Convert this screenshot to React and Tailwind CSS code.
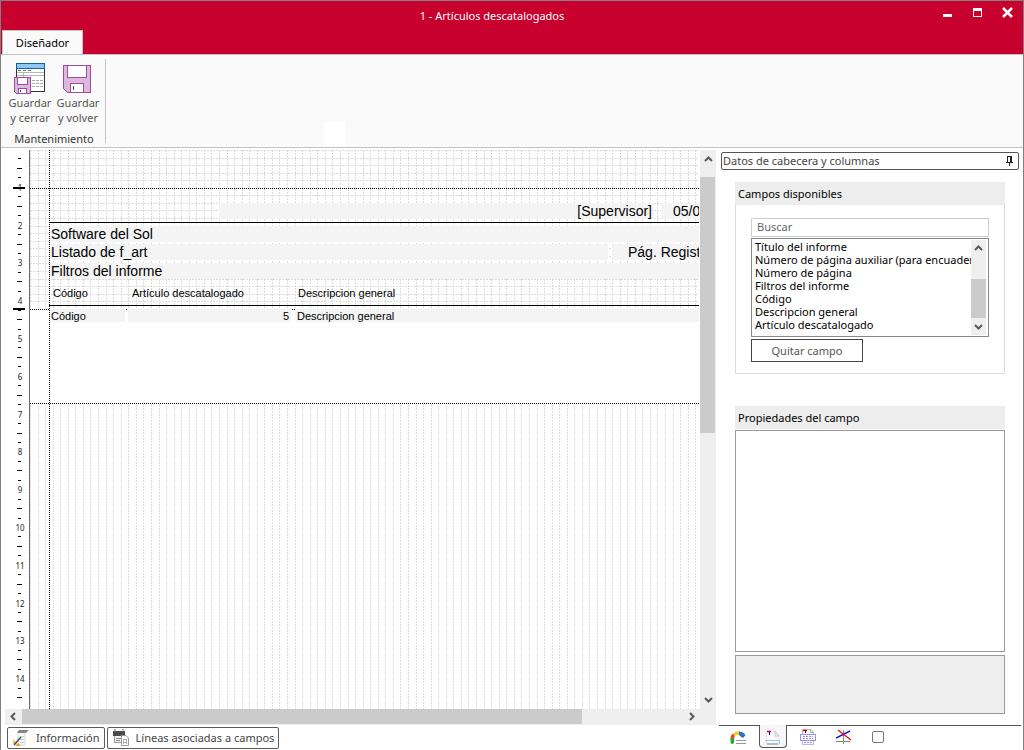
const CM = 37.8;
const STEP = CM / 5;

const FIELDS = [
  "Título del informe",
  "Número de página auxiliar (para encuadernar)",
  "Número de página",
  "Filtros del informe",
  "Código",
  "Descripcion general",
  "Artículo descatalogado",
];

function range(n) {
  return Array.from({ length: n }, (_, i) => i);
}

function Chevron({ dir }) {
  const d = {
    up: "M1 6 L4.5 2.5 L8 6",
    down: "M1 3 L4.5 6.5 L8 3",
    left: "M6 1 L2.5 4.5 L6 8",
    right: "M3 1 L6.5 4.5 L3 8",
  }[dir];
  return (
    <svg width="9" height="9" viewBox="0 0 9 9" fill="none" stroke="#5a5a5a" strokeWidth="2">
      <path d={d} />
    </svg>
  );
}

function FloppyIcon() {
  return (
    <svg width="32" height="32" viewBox="1 0 32 32" shapeRendering="crispEdges">
      <path d="M2.5 2.5H29.5V29.5H6.5L2.5 25.5Z" fill="#dcb9dc" stroke="#a04aa0" />
      <rect x="6.5" y="2.5" width="19" height="12" fill="#fff" stroke="#a04aa0" />
      <rect x="9.5" y="20.5" width="13" height="9" fill="#fff" stroke="#a04aa0" />
      <path d="M12.5 23V27" stroke="#555" />
    </svg>
  );
}

function SaveCloseIcon() {
  return (
    <svg width="32" height="32" viewBox="0 0 32 32" shapeRendering="crispEdges">
      <rect x="2.5" y="0.5" width="28" height="28" fill="#fff" stroke="#333" />
      <rect x="2.5" y="0.5" width="28" height="5" fill="#8fc7f0" stroke="#0d63ad" />
      <path d="M4 7.5H18" stroke="#777" strokeDasharray="3 2" />
      <path d="M3 9.5H30M3 12.5H30M9.5 10V14" stroke="#b5b5b5" fill="none" />
      <path d="M18 17.5H29M18 20.5H29M18 23.5H29" stroke="#aaa" strokeDasharray="3 1" />
      <path d="M0.5 14.5H16.5V30.5H2.5L0.5 28.5Z" fill="#dcb9dc" stroke="#a04aa0" />
      <rect x="3.5" y="14.5" width="10" height="7" fill="#fff" stroke="#a04aa0" />
      <rect x="4.5" y="25.5" width="8" height="5" fill="#fff" stroke="#a04aa0" />
      <path d="M6.5 27V29" stroke="#555" />
    </svg>
  );
}

function PinIcon() {
  return (
    <svg width="8" height="10" viewBox="0 0 8 10" shapeRendering="crispEdges" stroke="#222" fill="none">
      <path d="M1.5 6V0.5H5.5V6M4.5 0V6M0 6.5H7M3.5 7V10" />
    </svg>
  );
}

function InfoIcon() {
  return (
    <svg width="18" height="18" viewBox="0 0 18 18">
      <path d="M6 2H14L13 5V16H6Z" fill="#f7f7f7" stroke="#dadada" />
      <path d="M7 1H17L14 4H5Z" fill="#858585" />
      <path d="M8 7.5H12M8 10.5H12M8 13.5H12" stroke="#ccc" />
      <path d="M1 10L5 14L1 15Z" fill="#f8bf5e" />
      <path d="M2 16L9 8" stroke="#3c5064" strokeWidth="1.5" />
      <path d="M3 17L6 14L9 17Z" fill="#f29a2e" />
    </svg>
  );
}

function LinesIcon() {
  return (
    <svg width="18" height="18" viewBox="0 0 18 18">
      <rect x="2.5" y="4.5" width="9" height="9" fill="#f0f0f0" stroke="#999" />
      <path d="M1 2H13V7H1Z" fill="#4a4a4a" />
      <path d="M3 0V3M11 0V3" stroke="#777" />
      <path d="M4 9.5H9M4 11.5H8" stroke="#888" />
      <path d="M9.5 6.5H14L16.5 9V16.5H9.5Z" fill="#fff" stroke="#999" />
      <path d="M11.5 10V15M14.5 10V15M11 10.5H15M11 13.5H15" stroke="#b0b0b0" />
    </svg>
  );
}

function FormatIcon() {
  return (
    <svg width="16" height="16" viewBox="0 0 16 16">
      <path d="M0.5 9C0.5 5 2 3.5 4.5 4L4.5 8Z" fill="#e8402c" />
      <path d="M3.5 3.5Q6 0.5 9 1.5V5Q7 4 5 6Z" fill="#f2d11b" />
      <path d="M9 1.5Q13 1.5 15.5 5L13 8Q11 7 9 5Z" fill="#2d72bd" />
      <path d="M0.5 9L4 7V13Q1.5 15 0.5 12.5Z" fill="#1da838" />
      <path d="M6 10.5H15.5M6 13.5H15.5" stroke="#999" shapeRendering="crispEdges" />
    </svg>
  );
}

function HeaderPageIcon() {
  return (
    <svg width="16" height="16" viewBox="0 0 16 16">
      <path d="M1.5 1.5H10L14 5.5V14.5H1.5Z" fill="#fafafa" stroke="#e6e6e6" />
      <path d="M10 1V6H14Z" fill="#eee" stroke="#ccc" />
      <path d="M2 1.5H6" stroke="#e00000" strokeWidth="1.5" />
      <path d="M4.5 2V5" stroke="#0000c8" />
      <path d="M0 10.5H14.5V14" stroke="#9cc8f0" fill="none" />
      <path d="M2 14H13" stroke="#bbb" strokeWidth="2" />
    </svg>
  );
}

function PrintIcon() {
  return (
    <svg width="16" height="16" viewBox="0 0 16 16">
      <path d="M2.5 0.5H11L13.5 3V15.5H2.5Z" fill="#fafafa" stroke="#bbb" />
      <path d="M10.5 0.5V3.5H13.5" fill="none" stroke="#aaa" />
      <path d="M3 1.5H7" stroke="#e00000" strokeWidth="1.5" />
      <path d="M5.5 2V4" stroke="#0000c8" />
      <rect x="0.5" y="5.5" width="15" height="6" fill="#fff" stroke="#9090ff" />
      <path d="M3 7.5H13M3 9.5H13M4 13.5H12" stroke="#9a9ad8" strokeDasharray="2 1" />
    </svg>
  );
}

function AxesIcon() {
  return (
    <svg width="16" height="16" viewBox="0 0 16 16" fill="none">
      <path d="M7.500 1V15M0 12.5H14" stroke="#888" />
      <path d="M0 9L14 2" stroke="#1414d8" strokeWidth="1.5" />
      <path d="M2 1L15 11" stroke="#f01414" strokeWidth="1.5" />
    </svg>
  );
}

function Ruler() {
  return (
    <svg className="h-full w-[25px] shrink-0 border-r border-[#6b6b6b]" shapeRendering="crispEdges">
      {range(59).map((i) => {
        const y = Math.round((i * CM) / 4);
        if (i % 4 === 0) return null;
        const wide = i % 4 === 2;
        return <rect key={i} x={wide ? 12 : 13} y={y - 1} width={wide ? 5 : 3} height="1" fill="#000" />;
      })}
      {range(14).map((i) => (
        <text
          key={i}
          x="15"
          y={Math.round((i + 1) * CM) + 3}
          textAnchor="middle"
          fill="#222"
          className="text-[8px]"
        >
          {i + 1}
        </text>
      ))}
      <rect x="8" y="37" width="12" height="2" fill="#000" />
      <rect x="8" y="158" width="12" height="2" fill="#000" />
    </svg>
  );
}

function Grid() {
  return (
    <svg className="absolute inset-0 h-full w-full" shapeRendering="crispEdges">
      <g stroke="#dcdcdc" strokeDasharray="2 1">
        {range(260).map((i) => {
          const x = Math.round(i * STEP) + 0.5;
          return <line key={i} x1={x} x2={x} y1="0" y2="2000" />;
        })}
        {range(21).map((i) => {
          const y = Math.round(i * STEP) + 0.5;
          return <line key={i} x1="0" x2="2000" y1={y} y2={y} />;
        })}
      </g>
      <rect x="0" y="160" width="2000" height="93" fill="#fff" />
      <g stroke="#000" strokeDasharray="1 1">
        <line x1="0" x2="2000" y1="38.5" y2="38.5" />
        <line x1="0" x2="2000" y1="159.5" y2="159.5" />
        <line x1="0" x2="2000" y1="253.5" y2="253.5" />
        <line x1="19.5" x2="19.5" y1="0" y2="2000" />
      </g>
      <rect x="19" y="72" width="2000" height="1" fill="#000" />
      <rect x="19" y="155" width="2000" height="1" fill="#000" />
    </svg>
  );
}

function Field({ className, children }) {
  return <div className={`absolute overflow-hidden whitespace-nowrap ${className}`}>{children}</div>;
}

function Canvas() {
  return (
    <div className="relative mr-px min-w-0 flex-1 overflow-hidden bg-white font-['Liberation_Sans',sans-serif] text-black">
      <Grid />
      <Field className="left-[189px] top-[53px] h-4 w-[435px] bg-[#f4f4f4] pr-0.5 text-right text-sm leading-4">
        [Supervisor]
      </Field>
      <Field className="left-[631px] right-0 top-[53px] h-4 bg-[#f4f4f4] pl-3 text-sm leading-4">05/0</Field>
      <Field className="left-5 right-0 top-[76px] h-4 bg-[#f4f4f4] pl-px text-sm leading-4">Software del Sol</Field>
      <Field className="left-5 top-[94px] h-4 w-[558px] bg-[#f4f4f4] pl-px text-sm leading-4">Listado de f_art</Field>
      <Field className="left-[582px] right-0 top-[94px] h-4 bg-[#f4f4f4] pl-4 text-sm leading-4">Pág. Regist</Field>
      <Field className="left-5 right-0 top-[113px] h-4 bg-[#f4f4f4] pl-px text-sm leading-4">Filtros del informe</Field>
      <Field className="left-[23px] top-[137px] h-[13px] text-[11px] leading-[13px]">Código</Field>
      <Field className="left-[102px] top-[137px] h-[13px] text-[11px] leading-[13px]">Artículo descatalogado</Field>
      <Field className="left-[268px] top-[137px] h-[13px] text-[11px] leading-[13px]">Descripcion general</Field>
      <Field className="left-5 top-[159px] h-[13px] w-[75px] bg-[#f4f4f4] pl-px text-[11px] leading-[14px]">
        Código
      </Field>
      <Field className="left-[98px] top-[159px] h-[13px] w-[163px] bg-[#f4f4f4] pr-0.5 text-right text-[11px] leading-[14px]">
        5
      </Field>
      <Field className="left-[265px] right-0 top-[159px] h-[13px] bg-[#f4f4f4] pl-0.5 text-[11px] leading-[14px]">
        Descripcion general
      </Field>
    </div>
  );
}

function Designer() {
  return (
    <div className="flex min-w-0 flex-1 flex-col pl-1 pt-0.5">
      <div className="mr-[3px] flex min-h-0 flex-1">
        <Ruler />
        <Canvas />
        <div className="flex w-4 shrink-0 flex-col items-center bg-[#efefef]">
          <button aria-label="Subir" className="flex h-[27px] w-full items-start justify-center pt-[5px]">
            <Chevron dir="up" />
          </button>
          <div className="h-64 w-[15px] self-start bg-[#cbcbcb]" />
          <button aria-label="Bajar" className="mt-auto flex h-5 w-full items-center justify-center">
            <Chevron dir="down" />
          </button>
        </div>
      </div>
      <div className="mr-[3px] flex h-4 shrink-0 items-start bg-[#efefef]">
        <button aria-label="Izquierda" className="flex h-[15px] w-[17px] items-center justify-center">
          <Chevron dir="left" />
        </button>
        <div className="h-[15px] w-[560px] bg-[#cbcbcb]" />
        <button aria-label="Derecha" className="ml-auto mr-4 flex h-[15px] w-[17px] items-center justify-center">
          <Chevron dir="right" />
        </button>
      </div>
      <div className="flex h-[25px] shrink-0 items-start gap-0.5 pl-0.5 pt-0.5">
        <button className="flex h-[22px] items-center gap-1.5 rounded-xs border border-[#5a5a5a] pl-1 pr-1 pb-px text-[#444]">
          <InfoIcon />
          Información
        </button>
        <button className="flex h-[22px] items-center gap-1.5 rounded-xs border border-[#5a5a5a] pl-1 pr-1 pb-px text-[#444]">
          <LinesIcon />
          Líneas asociadas a campos
        </button>
      </div>
    </div>
  );
}

function SidePanel() {
  return (
    <aside className="flex w-[304px] shrink-0 flex-col pr-0.5">
      <div className="mx-0.5 mt-1 flex h-[18px] items-center justify-between rounded-xs border border-[#555] pl-px pr-1 text-[#444]">
        <span className="pb-0.5">Datos de cabecera y columnas</span>
        <button aria-label="Fijar panel">
          <PinIcon />
        </button>
      </div>
      <section className="ml-4 mr-4 mt-3">
        <h2 className="h-[23px] bg-[#ededed] pl-[3px] leading-[23px] text-black">Campos disponibles</h2>
        <div className="border border-t-0 border-[#dcdcdc] px-[15px] pb-[11px] pt-[13px]">
          <input
            aria-label="Buscar"
            placeholder="Buscar"
            className="block h-[19px] w-full border border-[#cfcfcf] px-[5px] pb-0.5 outline-none placeholder:text-[#666]"
          />
          <div className="mt-px flex h-[99px] border border-[#828790] pb-px pl-px pr-0.5">
            <select
              size={7}
              aria-label="Campos disponibles"
              className="h-full min-w-0 flex-1 overflow-hidden bg-white text-black outline-none [scrollbar-width:none]"
            >
              {FIELDS.map((f) => (
                <option key={f} className="h-[13px] min-h-0 p-0 pl-0.5 leading-[13px]">
                  {f}
                </option>
              ))}
            </select>
            <div className="mt-px flex w-[15px] flex-col bg-[#efefef]">
              <button aria-label="Subir lista" className="flex h-[17px] items-center justify-center">
                <Chevron dir="up" />
              </button>
              <div className="mt-[22px] h-[39px] bg-[#cbcbcb]" />
              <button aria-label="Bajar lista" className="flex h-[17px] items-center justify-center">
                <Chevron dir="down" />
              </button>
            </div>
          </div>
          <button className="mt-0.5 block h-[23px] w-28 border border-[#444] text-[#555]">Quitar campo</button>
        </div>
      </section>
      <section className="mx-4 mt-8 flex min-h-0 flex-1 flex-col">
        <h2 className="h-[23px] shrink-0 bg-[#ededed] pl-[3px] leading-[23px] text-black">Propiedades del campo</h2>
        <div className="mt-px flex-1 border border-[#9a9a9a]" />
        <div className="mt-[3px] h-[59px] border border-[#9a9a9a] bg-[#efefef]" />
      </section>
      <nav className="mt-[11px] flex h-[25px] shrink-0 border-t border-[#555]">
        <button aria-label="Formato" className="ml-[11px] mr-[13px] flex w-4 justify-center pt-1">
          <FormatIcon />
        </button>
        <button
          aria-label="Cabecera"
          className="-mt-px flex h-[23px] w-7 justify-center rounded-b-sm border border-t-0 border-[#555] bg-[#f6f6fb] pt-[5px]"
        >
          <HeaderPageIcon />
        </button>
        <button aria-label="Impresión" className="ml-[13px] flex w-4 justify-center pt-[3px]">
          <PrintIcon />
        </button>
        <button aria-label="Ejes" className="ml-5 flex w-4 justify-center pt-[3px]">
          <AxesIcon />
        </button>
        <input
          type="checkbox"
          aria-label="Marcar"
          className="ml-5 mt-[5px] h-3 w-3 appearance-none rounded-xs border border-[#777] bg-white"
        />
      </nav>
    </aside>
  );
}

export default function App() {
  return (
    <div className="flex h-screen flex-col border-x border-t border-[#808080] bg-white font-['Noto_Sans',sans-serif] text-[11px] leading-[15px]">
      <header className="grid h-[53px] shrink-0 grid-cols-[1fr_auto_1fr] items-start bg-[#c8002d] text-white">
        <button className="mt-[29px] ml-px h-[25px] w-[81px] border border-b-0 border-[#c4c4c4] bg-[#fafafa] pb-0.5 text-black">
          Diseñador
        </button>
        <h1 className="-ml-10 pt-[7px]">1 - Artículos descatalogados</h1>
        <div className="flex justify-end gap-[19px] pr-2.5 pt-1.5">
          <button aria-label="Minimizar">
            <svg width="11" height="12" shapeRendering="crispEdges">
              <rect x="1" y="7" width="9" height="3" fill="#fff" />
            </svg>
          </button>
          <button aria-label="Maximizar">
            <svg width="11" height="12" shapeRendering="crispEdges">
              <path d="M1 1H10V10H1ZM2 4V9H9V4Z" fill="#fff" fillRule="evenodd" />
            </svg>
          </button>
          <button aria-label="Cerrar">
            <svg width="11" height="12" stroke="#fff" strokeWidth="2.5">
              <path d="M1 1L10 10M10 1L1 10" />
            </svg>
          </button>
        </div>
      </header>
      <div className="flex h-[94px] shrink-0 border-b border-t border-[#c4c4c4] bg-[#fafafa]">
        <div className="my-1 flex w-[105px] flex-col items-center border-r border-[#c4c4c4] pl-0.5 pt-1 text-[#333]">
          <div className="flex text-[#555]">
            <button className="flex w-12 flex-col items-center">
              <SaveCloseIcon />
              <span>
                Guardar
                <br />y cerrar
              </span>
            </button>
            <button className="flex w-12 flex-col items-center">
              <FloppyIcon />
              <span>
                Guardar
                <br />y volver
              </span>
            </button>
          </div>
          <span className="mt-1.5">Mantenimiento</span>
        </div>
        <div className="ml-[219px] mt-[67px] h-6 w-5 bg-white" />
      </div>
      <main className="flex min-h-0 flex-1">
        <Designer />
        <SidePanel />
      </main>
    </div>
  );
}
